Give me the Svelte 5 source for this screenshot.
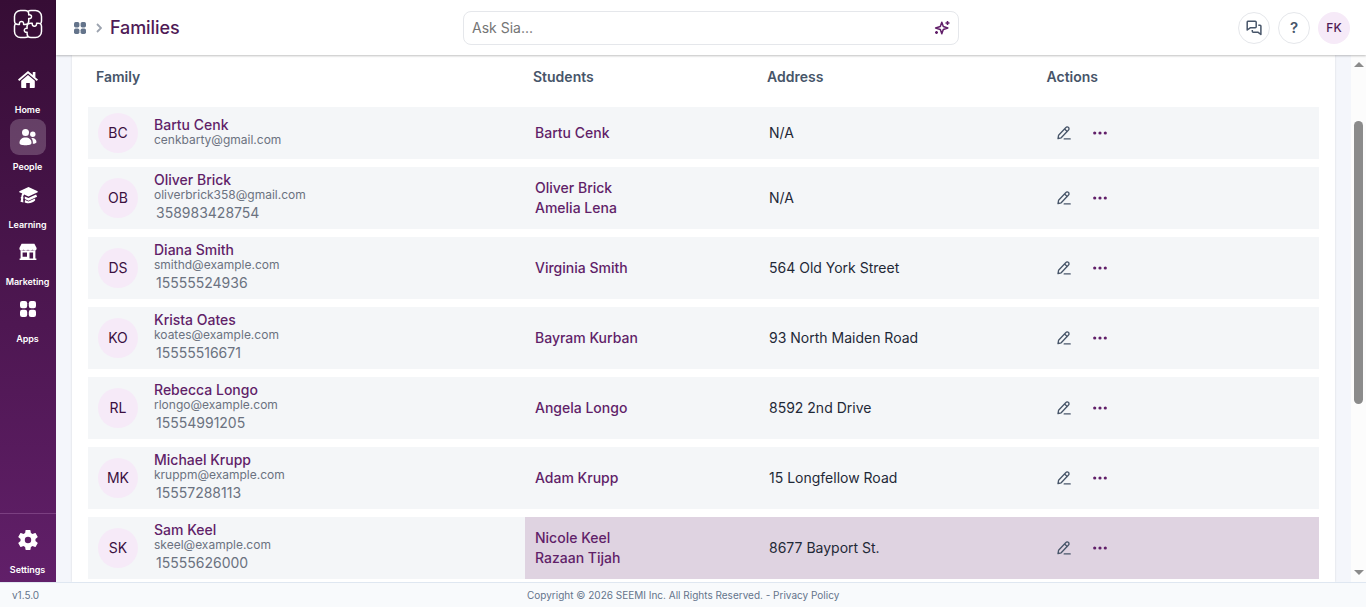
<script lang="ts">
    const menu = [
        { label: 'Home', icon: 'home' },
        { label: 'People', icon: 'people', active: true },
        { label: 'Learning', icon: 'learning' },
        { label: 'Marketing', icon: 'marketing' },
        { label: 'Apps', icon: 'apps' }
    ];

    const families = [
        { initials: 'BC', name: 'Bartu Cenk', email: 'cenkbarty@gmail.com', phone: '', students: ['Bartu Cenk'], address: 'N/A' },
        { initials: 'OB', name: 'Oliver Brick', email: 'oliverbrick358@gmail.com', phone: '358983428754', students: ['Oliver Brick', 'Amelia Lena'], address: 'N/A' },
        { initials: 'DS', name: 'Diana Smith', email: 'smithd@example.com', phone: '15555524936', students: ['Virginia Smith'], address: '564 Old York Street' },
        { initials: 'KO', name: 'Krista Oates', email: 'koates@example.com', phone: '15555516671', students: ['Bayram Kurban'], address: '93 North Maiden Road' },
        { initials: 'RL', name: 'Rebecca Longo', email: 'rlongo@example.com', phone: '15554991205', students: ['Angela Longo'], address: '8592 2nd Drive' },
        { initials: 'MK', name: 'Michael Krupp', email: 'kruppm@example.com', phone: '15557288113', students: ['Adam Krupp'], address: '15 Longfellow Road' },
        { initials: 'SK', name: 'Sam Keel', email: 'skeel@example.com', phone: '15555626000', students: ['Nicole Keel', 'Razaan Tijah'], address: '8677 Bayport St.', hovered: true }
    ];
</script>

{#snippet grid(size)}
    <svg width={size} height={size} viewBox="0 0 16 16" fill="currentColor">
        <rect x="0" y="0" width="7.2" height="7.2" rx="2.2" />
        <rect x="8.8" y="0" width="7.2" height="7.2" rx="2.2" />
        <rect x="0" y="8.8" width="7.2" height="7.2" rx="2.2" />
        <rect x="8.8" y="8.8" width="7.2" height="7.2" rx="2.2" />
    </svg>
{/snippet}

<div class="app">
    <div class="body">
        <aside>
            <svg class="logo" width="30" height="30" viewBox="0 0 30 30" fill="none" stroke="#fff" stroke-width="1.5" stroke-linejoin="round">
                <path d="M15 2.500C14 1.700 13 1.500 12 1.500H7.500a6 6 0 0 0-6 6V12c0 1.200.3 2 1 2.700-.7.8-1 1.600-1 2.800v5a6 6 0 0 0 6 6H12c1.200 0 2.200-.3 3-1 .8.700 1.800 1 3 1h4.500a6 6 0 0 0 6-6v-5c0-1.200-.3-2-1-2.800.7-.7 1-1.500 1-2.700V7.500a6 6 0 0 0-6-6H18c-1.200 0-2.200.2-3 1z" />
                <path d="M15 2.500c.8.900.9 2 .7 3.400 2.300-.3 3 .8 2.800 2-.2 1.300-1.300 1.900-2.800 1.600.3 2.200.1 3.800-.7 5.200-1.600.8-3 .9-4.400.7.2-2-.6-3-2.100-3s-2.300 1-2.100 3c-1.600.2-2.900 0-3.900-.7" />
                <path d="M15 14.700c-1 1.300-1.200 2.700-.9 4.700-1.800-.2-2.800.5-2.800 1.900s1 2.100 2.800 1.900c-.2 1.900 0 3.300.9 4.300M15 14.700c1.200-.5 2.700-.6 4.200-.4-.1 2 .7 3 2.200 3s2.300-1 2.200-3c1.600-.2 2.900-.1 3.900.4" />
            </svg>
            <nav>
                {#each menu as item}
                    <div class="item">
                        <div class="tile" class:active={item.active}>
                            {#if item.icon === 'home'}
                                <svg class="home" width="20" height="17" viewBox="0 0 20 17" fill="#fff">
                                    <path d="M10 0 0 8.600l1.200 1.300L10 2.400l8.800 7.500L20 8.600l-2.600-2.200V1h-2.600v3.100z" />
                                    <path d="M10 3.900 3.200 9.700V16.200c0 .4.300.8.700.8h4.300v-5h3.600v5h4.300c.4 0 .7-.4.7-.8V9.700z" />
                                </svg>
                            {:else if item.icon === 'people'}
                                <svg width="18" height="18" viewBox="0 0 18 18" fill="#fff">
                                    <circle cx="6.500" cy="4.500" r="3.500" />
                                    <path d="M.5 15c0-3.400 2.500-5.400 6-5.400s6 2 6 5.400c0 1.600-2.500 2.200-6 2.200S.5 16.600.5 15z" />
                                    <circle cx="13.800" cy="6.300" r="2.700" />
                                    <path d="M12.300 10c3-.6 5.200 1.500 5.200 4 0 1.200-1.500 1.800-3.700 1.800.3-2.200-.2-4.200-1.500-5.800z" />
                                </svg>
                            {:else if item.icon === 'learning'}
                                <svg width="19" height="18" viewBox="0 0 19 18" fill="#fff">
                                    <path d="M9.500 1 .3 5.200v1l3 1.400c-.7 1-.9 2-1 3.200-.8.500-.8 1.400-.1 1.900L1.500 15.700l2.900.8-.3-3.800c.6-.5.600-1.300 0-1.800.1-1 .400-1.800 1-2.500l4.400 2 9.200-4.200v-1z" />
                                    <path d="M5.700 10.400 9.500 12l7.600-3.400 1 2.100-8.600 4-3.700-1.800z" />
                                    <path d="m6 14 3.500 1.600 6.600-3v2c-2 2-4.200 2.700-6.600 2.700-1.700 0-2.900-.4-3.800-.8z" />
                                </svg>
                            {:else if item.icon === 'marketing'}
                                <svg width="18" height="18" viewBox="0 0 18 18" fill="#fff">
                                    <path d="M2.600.8h12.800L17.600 5c.1 1.700-.8 2.700-2.100 2.700-1.200 0-1.800-.5-2.200-1.200-.4.700-1.100 1.200-2.100 1.200S9.400 7.200 9 6.500c-.4.700-1.200 1.200-2.200 1.200s-1.700-.5-2.100-1.200c-.4.700-1 1.200-2.200 1.200C1.200 7.700.3 6.700.4 5z" />
                                    <path fill-rule="evenodd" d="M1.600 7.500h14.800v8.100h1v1.500H.6v-1.500h1zM3.600 9.600v4.200H8V9.600zM10.500 9.600v6h3.600v-6z" />
                                </svg>
                            {:else}
                                {@render grid(16)}
                            {/if}
                        </div>
                        <span>{item.label}</span>
                    </div>
                {/each}
            </nav>
            <div class="item settings">
                <div class="tile">
                    <svg width="24" height="24" viewBox="0 0 24 24" fill="#fff">
                        <path d="M19.430 12.980c.04-.32.070-.64.070-.98s-.03-.66-.07-.98l2.110-1.650c.19-.15.240-.42.120-.64l-2-3.460c-.12-.22-.39-.3-.61-.22l-2.490 1c-.52-.4-1.080-.73-1.690-.98l-.38-2.650A.488.488 0 0 0 14 2h-4c-.25 0-.46.180-.49.420l-.38 2.650c-.61.250-1.170.590-1.690.980l-2.490-1c-.23-.09-.49 0-.61.220l-2 3.460c-.13.220-.07.490.120.640l2.110 1.650c-.04.320-.07.650-.07.980s.03.660.070.980l-2.110 1.650c-.19.150-.24.420-.12.640l2 3.460c.12.220.390.300.610.220l2.490-1c.52.400 1.080.730 1.690.980l.38 2.650c.03.240.240.420.490.420h4c.25 0 .46-.18.490-.42l.38-2.650c.61-.25 1.170-.59 1.690-.98l2.490 1c.23.090.490 0 .610-.22l2-3.460c.12-.22.070-.49-.12-.64zM12 15.200a3.200 3.200 0 1 1 0-6.400 3.200 3.200 0 0 1 0 6.400z" />
                    </svg>
                </div>
                <span>Settings</span>
            </div>
        </aside>

        <div class="page">
            <header>
                <div class="crumbs">
                    {@render grid(12)}
                    <svg class="chevron" width="6" height="10" viewBox="0 0 6 10" fill="none" stroke="#9ca3af" stroke-width="1.800">
                        <path d="m1 1 4 4-4 4" />
                    </svg>
                    <h1>Families</h1>
                </div>
                <div class="search">
                    <span>Ask Sia...</span>
                    <svg width="16" height="16" viewBox="0 0 16 16" fill="none" stroke="#611f69" stroke-width="1.500" stroke-linejoin="round">
                        <path d="M7.800 2.300 9.300 6.500 13.800 8 9.300 9.500 7.800 13.700 6.300 9.500 1.600 8l4.700-1.500z" />
                        <path d="M13.500 1v4M11.500 3h4M2.500 11v3M1 12.500h3" />
                    </svg>
                </div>
                <div class="tools">
                    <button aria-label="Messages">
                        <svg width="16" height="16" viewBox="0 0 16 16" fill="none" stroke="#475569" stroke-width="1.500" stroke-linejoin="round">
                            <path d="M2 1.200h7.200a1 1 0 0 1 1 1v4.600a1 1 0 0 1-1 1H4.200L1.200 10V2.200a1 1 0 0 1 .8-1z" />
                            <path d="M12.300 5.200H14a.9.9 0 0 1 .9.900V14.500l-2.700-2.200H7.300a1 1 0 0 1-1-1v-1.200" />
                        </svg>
                    </button>
                    <button class="help">?</button>
                    <button class="user">FK</button>
                </div>
            </header>

            <div class="scroller">
                <main>
                    <div class="row head">
                        <div>Family</div>
                        <div>Students</div>
                        <div>Address</div>
                        <div>Actions</div>
                    </div>
                    {#each families as family}
                        <div class="row" class:short={!family.phone} class:hovered={family.hovered}>
                            <div class="family">
                                <div class="avatar">{family.initials}</div>
                                <div class="contact">
                                    <a href="#family">{family.name}</a>
                                    <small>{family.email}</small>
                                    {#if family.phone}<span>{family.phone}</span>{/if}
                                </div>
                            </div>
                            <div class="students">
                                {#each family.students as student}
                                    <a href="#student">{student}</a>
                                {/each}
                            </div>
                            <div class="address">{family.address}</div>
                            <div class="actions">
                                <svg width="14" height="14" viewBox="0 0 14 14" fill="none" stroke="#475569" stroke-width="1.300" stroke-linecap="round" stroke-linejoin="round">
                                    <path d="M1.600 9.200 8.700 1.700c.9-.9 2-1 2.800-.2s.7 1.900-.2 2.800L4.200 11.800l-3.200.9zM7.600 3l2.600 2.500M7.200 12.900h6" />
                                </svg>
                                <svg width="14" height="4" viewBox="0 0 14 4" fill="#611f69">
                                    <circle cx="1.700" cy="2" r="1.600" /><circle cx="7" cy="2" r="1.600" /><circle cx="12.300" cy="2" r="1.600" />
                                </svg>
                            </div>
                        </div>
                    {/each}
                </main>
                <div class="scrollbar">
                    <i class="up"></i>
                    <i class="thumb"></i>
                    <i class="down"></i>
                </div>
            </div>
        </div>
    </div>
    <footer>
        <span class="version">v1.5.0</span>
        <span>Copyright © 2026 SEEMI Inc. All Rights Reserved. - Privacy Policy</span>
    </footer>
</div>

<style>
    :global(body){margin: 0; overflow: hidden;}
    .app, .app *{box-sizing: border-box;}
    .app{
        display: flex; flex-direction: column;
        height: 100vh;
        font-family: Inter, "Liberation Sans", sans-serif;
        font-size: 14px;
        color: #1f2937;
    }
    svg{display: block; flex: none;}
    a{color: #611f69; text-decoration: none;}
    .body{display: flex; flex: 1; min-height: 0;}

    aside{
        display: flex; flex-direction: column;
        width: 56px; flex: none;
        color: #fff;
        background: linear-gradient(#360d35, #611f69);
    }
    .logo{margin: 9px 0 23px 13px;}
    .home{margin-bottom: 2px;}
    nav{flex: 1;}
    .item{display: flex; flex-direction: column; align-items: center; height: 57.3px;}
    .item span{margin: 4px 0 0 -1px; font-size: 9px; line-height: 15px; font-weight: 600; letter-spacing: -.05px;}
    .tile{display: flex; align-items: center; justify-content: center; width: 36px; height: 36px; flex: none; border-radius: 9px;}
    .tile.active{background: rgba(255, 255, 255, .2);}
    .settings{height: 69px; padding-top: 8px; border-top: 1px solid #7b3f81;}

    .page{display: flex; flex-direction: column; flex: 1; min-width: 0;}
    header{
        position: relative;
        display: flex; align-items: center;
        height: 55px; flex: none;
        background: #fff;
        box-shadow: 0 1px 2px rgba(0, 0, 0, .25);
    }
    .crumbs{display: flex; align-items: center; width: 407px; padding-left: 18px; color: #64748b;}
    .chevron{margin: 0 8px 0 10px;}
    h1{margin: 0; font-size: 18px; line-height: 24px; font-weight: 500; letter-spacing: -.1px; color: #4f1a56;}
    .search{
        display: flex; align-items: center; justify-content: space-between;
        width: 496px; height: 34px;
        padding: 0 8px;
        border: 1px solid #e5e7eb; border-radius: 8px;
        color: #757575;
    }
    .tools{display: flex; gap: 8px; margin-left: auto; padding-right: 16px;}
    .tools button{
        display: flex; align-items: center; justify-content: center;
        width: 32px; height: 32px; padding: 0;
        border: 1px solid #e5e7eb; border-radius: 50%;
        background: #fff;
        font: 500 12px Inter, sans-serif;
        color: #4f1a56;
    }
    .tools .help{font-size: 15px; font-weight: 600; color: #475569;}
    .tools .user{border: none; background: #f6eaf8;}

    .scroller{display: flex; flex: 1; min-height: 0; background: #f4f6fb;}
    main{
        flex: 1;
        margin: 0 16px; padding: 0 16px;
        background: #fff;
        box-shadow: 0 0 2px rgba(0, 0, 0, .12);
        overflow: hidden;
    }
    .row{
        display: grid; grid-template-columns: 437px 234px 279.500px 1fr;
        height: 62px; margin-bottom: 8px;
        line-height: 20px;
    }
    .row > div{display: flex; align-items: center; padding: 0 10px; background: #f4f6f8;}
    .row.short{height: 52px;}
    .row.short .contact{padding-bottom: 2px;}
    .row.head{height: 44px; font-weight: 600; color: #475569;}
    .row.head > div{padding: 0 8px; background: none;}
    .row.hovered > div:not(.family){background: #dfd3e1;}
    .row .students{flex-direction: column; align-items: flex-start; justify-content: center; font-weight: 500;}
    .avatar{
        display: flex; align-items: center; justify-content: center;
        width: 40px; height: 40px; margin-right: 16px;
        border-radius: 50%;
        background: #f6eaf8; color: #3b1040;
    }
    .contact{display: flex; flex-direction: column;}
    .contact a{line-height: 16px; font-weight: 500;}
    .contact small{font-size: 12px; line-height: 14px; color: #6b7280;}
    .contact span{padding-left: 2px; line-height: 22px; color: #6b7280;}
    .row .actions{gap: 22px; padding-left: 18px;}

    .scrollbar{display: flex; flex-direction: column; align-items: center; width: 15px; padding: 7px 0; background: #fcfcfc;}
    .scrollbar i{display: block;}
    .up, .down{border: 5px solid transparent; border-top-width: 0; border-bottom: 5px solid #8b8b8b;}
    .down{margin-top: auto; border-bottom: 0; border-top: 5px solid #8b8b8b;}
    .thumb{width: 9px; height: 283px; margin-top: 54px; border-radius: 5px; background: #8b8b8b;}

    footer{
        display: flex; align-items: center;
        height: 25px; flex: none;
        border-top: 1px solid #dfe7f1;
        background: #f8fafc;
        font-size: 10px;
        color: #64748b;
    }
    .version{width: 527px; padding-left: 12px;}
</style>
